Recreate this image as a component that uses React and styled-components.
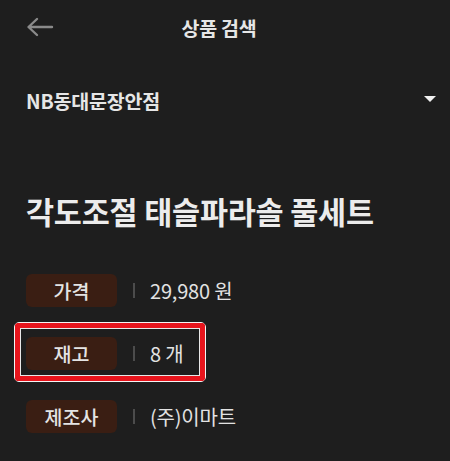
import React from "react";
import styled, { createGlobalStyle } from "styled-components";

const GlobalStyle = createGlobalStyle`
  html, body {
    margin: 0;
    padding: 0;
    background: #1e1e1e;
  }
  body {
    font-family: "Noto Sans CJK KR", "Noto Sans", sans-serif;
    color: #e8e8e8;
  }
`;

const Page = styled.div`
  width: 450px;
  height: 461px;
  background: #1e1e1e;
  overflow: hidden;
`;

const Header = styled.div`
  height: 54px;
  display: grid;
  grid-template-columns: 80px 1fr 92px;
  align-items: center;
  .back {
    padding-left: 26px;
    display: flex;
    align-items: center;
  }
  h1 {
    margin: 0;
    text-align: center;
    font-size: 19.5px;
    font-weight: 700;
    color: #e6e6e6;
    letter-spacing: -0.2px;
  }
`;

const StoreSelect = styled.div`
  margin-top: 30px;
  height: 32px;
  padding: 0 14px 0 26px;
  display: flex;
  align-items: center;
  justify-content: space-between;
  font-size: 19.5px;
  font-weight: 700;
  color: #e6e6e6;
  letter-spacing: -0.2px;
  .caret {
    width: 0;
    height: 0;
    border-left: 6px solid transparent;
    border-right: 6px solid transparent;
    border-top: 6px solid #f0f0f0;
    margin-top: -3px;
  }
`;

const Title = styled.h2`
  margin: 78px 0 0;
  padding-left: 26px;
  font-size: 30.5px;
  font-weight: 700;
  line-height: 34px;
  color: #ececec;
  letter-spacing: -0.2px;
`;

const InfoList = styled.div`
  margin-top: 46px;
  padding-left: 26px;
  display: flex;
  flex-direction: column;
  gap: 30px;
`;

const Row = styled.div`
  position: relative;
  display: flex;
  align-items: center;
  height: 33px;
`;

const Badge = styled.div`
  width: 91px;
  height: 33px;
  border-radius: 6px;
  background: #3a1e13;
  display: flex;
  align-items: center;
  justify-content: center;
  font-size: 19.5px;
  font-weight: 500;
  color: #e4e4e4;
`;

const Divider = styled.span`
  width: 2px;
  height: 15px;
  background: #4c4c4c;
  margin: 0 15px 0 16px;
`;

const Value = styled.span`
  font-size: 20px;
  color: #e2e2e2;
  letter-spacing: -0.2px;
`;

const Highlight = styled.div`
  position: absolute;
  left: -12px;
  top: -15px;
  width: 192px;
  height: 60px;
  box-sizing: border-box;
  border: 1.5px solid #f4f4f4;
  border-radius: 5px;
  pointer-events: none;
  &::before {
    content: "";
    position: absolute;
    inset: 0;
    border: 5px solid #e8141c;
    border-radius: 3px;
  }
  &::after {
    content: "";
    position: absolute;
    inset: 5px;
    border: 1px solid #e8e8e8;
  }
`;

const BackArrow = () => (
  <svg width="28" height="20" viewBox="0 0 28 20" fill="none">
    <path
      d="M26 10H3M11 2L2.5 10L11 18"
      stroke="#8a8a8a"
      strokeWidth="2.4"
      strokeLinecap="round"
      strokeLinejoin="round"
    />
  </svg>
);

const rows = [
  { label: "가격", value: "29,980 원" },
  { label: "재고", value: "8 개", marked: true },
  { label: "제조사", value: "(주)이마트" },
];

export default function App() {
  return (
    <Page>
      <GlobalStyle />
      <Header>
        <div className="back">
          <BackArrow />
        </div>
        <h1>상품 검색</h1>
        <div />
      </Header>
      <StoreSelect>
        <span>NB동대문장안점</span>
        <span className="caret" />
      </StoreSelect>
      <Title>각도조절 태슬파라솔 풀세트</Title>
      <InfoList>
        {rows.map((r) => (
          <Row key={r.label}>
            {r.marked && <Highlight />}
            <Badge>{r.label}</Badge>
            <Divider />
            <Value>{r.value}</Value>
          </Row>
        ))}
      </InfoList>
    </Page>
  );
}
